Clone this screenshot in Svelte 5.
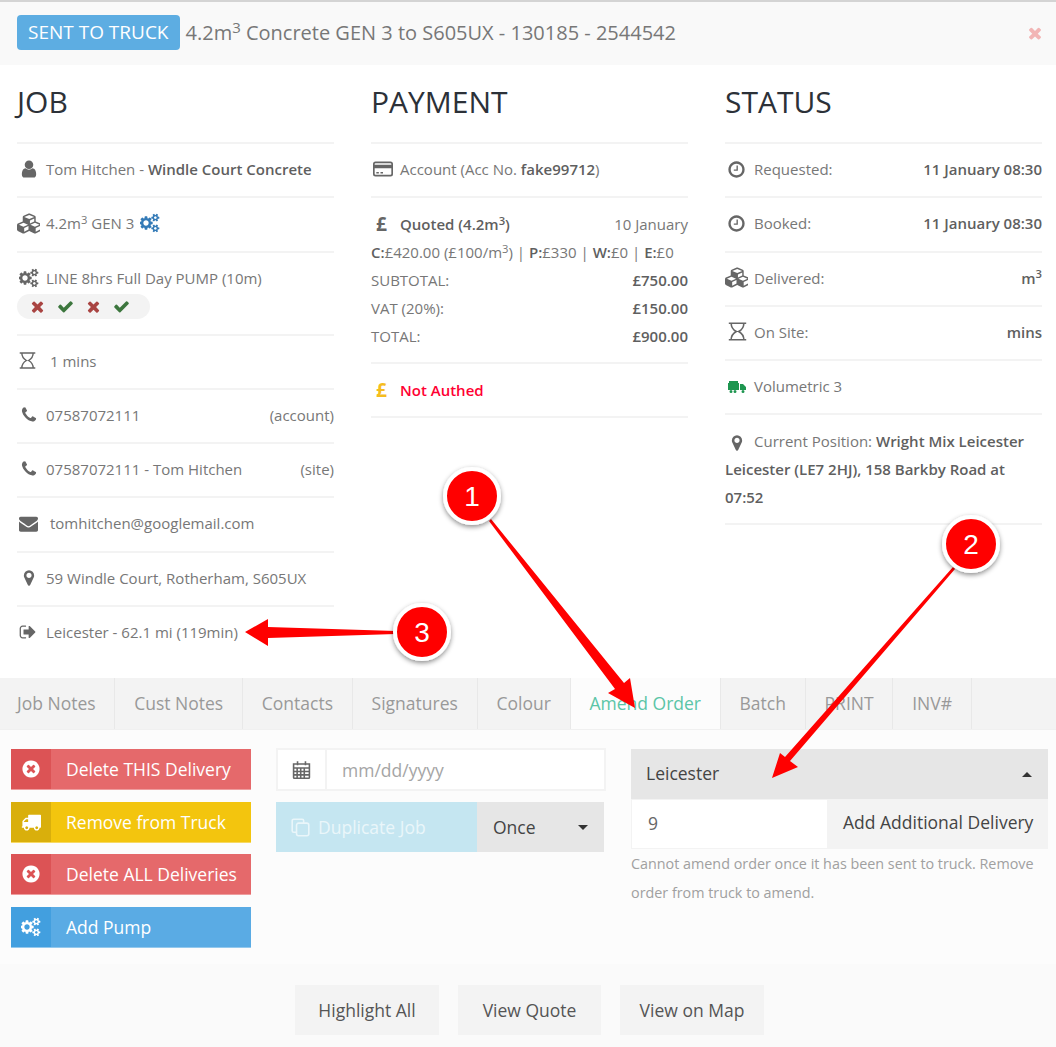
<script>
	const icons = {
		user: ["0 0 1792 1792", "M1536 1399q0 109-62.5 187t-150.5 78h-854q-88 0-150.5-78t-62.5-187q0-85 8.5-160.5t31.5-152 58.5-131 94-89 134.5-34.5q131 128 313 128t313-128q76 0 134.5 34.5t94 89 58.5 131 31.5 152 8.5 160.5zm-256-887q0 159-112.5 271.5t-271.5 112.5-271.5-112.5-112.5-271.5 112.5-271.5 271.5-112.5 271.5 112.5 112.5 271.5z"],
		phone: ["0 0 1792 1792", "M1600 1240q0 27-10 70.5t-21 68.5q-21 50-122 106-94 51-186 51-27 0-53-3.5t-57.5-12.5-47-14.5-55.5-20.5-49-18q-98-35-175-83-127-79-264-216t-216-264q-48-77-83-175-3-9-18-49t-20.5-55.5-14.5-47-12.5-57.5-3.5-53q0-92 51-186 56-101 106-122 25-11 68.5-21t70.5-10q14 0 21 3 18 6 53 76 11 19 30 54t35 63.5 31 53.5q3 4 17.5 25t21.5 35.5 7 28.5q0 20-28.5 50t-62 55-62 53-28.5 46q0 9 5 22.5t8.5 20.5 14 24 11.5 19q76 137 174 235t235 174q2 1 19 11.5t24 14 20.5 8.5 22.5 5q18 0 46-28.5t53-62 55-62 50-28.5q14 0 28.5 7t35.5 21.5 25 17.5q25 15 53.5 31t63.5 35 54 30q70 35 76 53 3 7 3 21z"],
		envelope: ["0 0 1792 1792", "M1792 710v794q0 66-47 113t-113 47h-1472q-66 0-113-47t-47-113v-794q44 49 101 87 362 246 497 345 57 42 92.5 65.5t94.5 48 110 24.5h2q51 0 110-24.5t94.5-48 92.5-65.5q170-123 498-345 57-39 100-87zm0-294q0 79-49 151t-122 123q-376 261-468 325-10 7-42.5 30.5t-54 38-52 32.5-57.5 27-50 9h-2q-23 0-50-9t-57.5-27-52-32.5-54-38-42.5-30.5q-91-64-262-182.5t-205-142.5q-62-42-117-115.5t-55-136.5q0-78 41.5-130t118.5-52h1472q65 0 112.5 47t47.5 113z"],
		marker: ["0 0 1792 1792", "M1152 640q0-106-75-181t-181-75-181 75-75 181 75 181 181 75 181-75 75-181zm256 0q0 109-33 179l-364 774q-16 33-47.5 52t-67.5 19-67.5-19-46.5-52l-365-774q-33-70-33-179 0-212 150-362t362-150 362 150 150 362z"],
		check: ["0 0 1792 1792", "M1671 566q0 40-28 68l-724 724-136 136q-28 28-68 28t-68-28l-136-136-362-362q-28-28-28-68t28-68l136-136q28-28 68-28t68 28l294 295 656-657q28-28 68-28t68 28l136 136q28 28 28 68z"],
		times: ["0 0 1792 1792", "M1490 1322q0 40-28 68l-136 136q-28 28-68 28t-68-28l-294-294-294 294q-28 28-68 28t-68-28l-136-136q-28-28-28-68t28-68l294-294-294-294q-28-28-28-68t28-68l136-136q28-28 68-28t68 28l294 294 294-294q28-28 68-28t68 28l136 136q28 28 28 68t-28 68l-294 294 294 294q28 28 28 68z"],
		timesCircle: ["0 0 1792 1792", "M1277 1122q0-26-19-45l-181-181 181-181q19-19 19-45 0-27-19-46l-90-90q-19-19-46-19-26 0-45 19l-181 181-181-181q-19-19-45-19-27 0-46 19l-90 90q-19 19-19 46 0 26 19 45l181 181-181 181q-19 19-19 45 0 27 19 46l90 90q19 19 46 19 26 0 45-19l181-181 181 181q19 19 45 19 27 0 46-19l90-90q19-19 19-46zm387-226q0 209-103 385.5t-279.5 279.5-385.5 103-385.5-103-279.5-279.5-103-385.5 103-385.5 279.5-279.5 385.5-103 385.5 103 279.5 279.5 103 385.5z"],
		clock: ["0 0 1792 1792", "M1024 544v448q0 14-9 23t-23 9h-320q-14 0-23-9t-9-23v-64q0-14 9-23t23-9h224v-352q0-14 9-23t23-9h64q14 0 23 9t9 23zm416 352q0-148-73-273t-198-198-273-73-273 73-198 198-73 273 73 273 198 198 273 73 273-73 198-198 73-273zm224 0q0 209-103 385.5t-279.5 279.5-385.5 103-385.5-103-279.5-279.5-103-385.5 103-385.5 279.5-279.5 385.5-103 385.5 103 279.5 279.5 103 385.5z"],
		truck: ["0 0 1792 1792", "M640 1408q0-52-38-90t-90-38-90 38-38 90 38 90 90 38 90-38 38-90zm-384-512h384v-256h-158q-13 0-22 9l-195 195q-9 9-9 22v30zm1280 512q0-52-38-90t-90-38-90 38-38 90 38 90 90 38 90-38 38-90zm256-1088v1024q0 15-4 26.5t-13.5 18.5-16.5 11.5-23.5 6-22.5 2-25.5 0-22.5-.5q0 106-75 181t-181 75-181-75-75-181h-384q0 106-75 181t-181 75-181-75-75-181h-64q-3 0-22.5.5t-25.5 0-22.5-2-23.5-6-16.5-11.5-13.5-18.5-4-26.5q0-26 19-45t45-19v-320q0-8-.5-35t0-38 2.5-34.5 6.5-37 14-30.5 22.5-30l198-198q19-19 50.5-32t58.5-13h160v-192q0-26 19-45t45-19h1024q26 0 45 19t19 45z"],
		cogs: ["0 0 1920 1792", "M832 896q0-106-75-181t-181-75-181 75-75 181 75 181 181 75 181-75 75-181zm768 512q0-52-38-90t-90-38-90 38-38 90q0 53 37.5 90.5t90.5 37.5 90.5-37.5 37.5-90.5zm0-1024q0-52-38-90t-90-38-90 38-38 90q0 53 37.5 90.5t90.5 37.5 90.5-37.5 37.5-90.5zm-384 421v185q0 10-7 19.5t-16 10.5l-155 24q-11 35-32 76 34 48 90 115 7 11 7 20 0 12-7 19-23 30-82.5 89.5t-78.5 59.5q-11 0-21-7l-115-90q-37 19-77 31-11 108-23 155-7 24-30 24h-186q-11 0-20-7.5t-10-17.5l-23-153q-34-10-75-31l-118 89q-7 7-20 7-11 0-21-8-144-133-144-160 0-9 7-19 10-14 41-53t47-61q-23-44-35-82l-152-24q-10-1-17-9.5t-7-19.5v-185q0-10 7-19.5t16-10.5l155-24q11-35 32-76-34-48-90-115-7-11-7-20 0-12 7-20 22-30 82-89t79-59q11 0 21 7l115 90q34-18 77-32 11-108 23-154 7-24 30-24h186q11 0 20 7.5t10 17.5l23 153q34 10 75 31l118-89q8-7 20-7 11 0 21 8 144 133 144 160 0 8-7 19-12 16-42 54t-45 60q23 48 34 82l152 23q10 2 17 10.5t7 19.5zm640 533v140q0 16-149 31-12 27-30 52 51 113 51 138 0 4-4 7-122 71-124 71-8 0-46-47t-52-68q-20 2-30 2t-30-2q-14 21-52 68t-46 47q-2 0-124-71-4-3-4-7 0-25 51-138-18-25-30-52-149-15-149-31v-140q0-16 149-31 13-29 30-52-51-113-51-138 0-4 4-7 4-2 35-20t59-34 30-16q8 0 46 46.5t52 67.5q20-2 30-2t30 2q51-71 92-112l6-2q4 0 124 70 4 3 4 7 0 25-51 138 17 23 30 52 149 15 149 31zm0-1024v140q0 16-149 31-12 27-30 52 51 113 51 138 0 4-4 7-122 71-124 71-8 0-46-47t-52-68q-20 2-30 2t-30-2q-14 21-52 68t-46 47q-2 0-124-71-4-3-4-7 0-25 51-138-18-25-30-52-149-15-149-31v-140q0-16 149-31 13-29 30-52-51-113-51-138 0-4 4-7 4-2 35-20t59-34 30-16q8 0 46 46.5t52 67.5q20-2 30-2t30 2q51-71 92-112l6-2q4 0 124 70 4 3 4 7 0 25-51 138 17 23 30 52 149 15 149 31z"],
		cubes: ["0 0 2048 1792", "M640 1632l384-192v-314l-384 164v342zm-64-454l404-173-404-173-404 173zm1088 454l384-192v-314l-384 164v342zm-64-454l404-173-404-173-404 173zm-448-293l384-165v-266l-384 164v267zm-64-379l441-189-441-189-441 189zm1088 518v416q0 36-19 67t-52 47l-448 224q-25 14-57 14t-57-14l-448-224q-4-2-7-4-2 2-7 4l-448 224q-25 14-57 14t-57-14l-448-224q-33-16-52-47t-19-67v-416q0-38 21.5-70t56.5-48l434-186v-400q0-38 21.5-70t56.5-48l448-192q23-10 50-10t50 10l448 192q35 16 56.5 48t21.5 70v400l434 186q36 16 57 48t21 70z"],
		signOut: ["0 0 1792 1792", "M704 1440q0 4 1 20t.5 26.5-3 23.5-10 19.5-20.5 6.5h-320q-119 0-203.5-84.5t-84.5-203.5v-704q0-119 84.5-203.5t203.5-84.5h320q13 0 22.5 9.5t9.5 22.5q0 4 1 20t.5 26.5-3 23.5-10 19.5-20.5 6.5h-320q-66 0-113 47t-47 113v704q0 66 47 113t113 47h312l11.5 1 11.5 3 8 5.5 7 9 2 13.5zm928-544q0 26-19 45l-544 544q-19 19-45 19t-45-19-19-45v-288h-448q-26 0-45-19t-19-45v-384q0-26 19-45t45-19h448v-288q0-26 19-45t45-19 45 19l544 544q19 19 19 45z"],
		lorry: ["0 0 18 13", "M1 1h9v2h1v7H0V3h1zM12 4h3l3 3v3h-6zM3 10a1.500 1.500 0 1 1 0 3 1.500 1.500 0 0 1 0-3zM7 10a1.500 1.500 0 1 1 0 3 1.500 1.500 0 0 1 0-3zM15 10a1.500 1.500 0 1 1 0 3 1.500 1.500 0 0 1 0-3z"],
		hourglass: ["0 0 24 24", "M1 1.500h22M1 22.500h22M4 1.500c0 5 2 8 6.500 10.500C6 14.500 4 17.500 4 22.500M20 1.500c0 5-2 8-6.500 10.500c4.500 2.500 6.500 5.500 6.500 10.500"],
		card: ["0 0 24 24", "M3 4h18a2 2 0 0 1 2 2v12a2 2 0 0 1-2 2H3a2 2 0 0 1-2-2V6a2 2 0 0 1 2-2zM1 8h22M1 10h22M4 16.500h3M9 16.500h3"],
		files: ["0 0 24 24", "M7 18H3.500a2 2 0 0 1-2-2V3.500a2 2 0 0 1 2-2H14a2 2 0 0 1 2 2V6M9.500 6.500H20a2.500 2.500 0 0 1 2.500 2.500v11a2.500 2.500 0 0 1-2.500 2.500H9.500A2.500 2.500 0 0 1 7 20V9a2.500 2.500 0 0 1 2.500-2.500z"],
		calendar: ["0 0 24 24", "M2 5h20v17a1 1 0 0 1-1 1H3a1 1 0 0 1-1-1zM2 10h20M2 14.500h20M2 18.800h20M6.500 10v13M11 10v13M15.500 10v13M7 1.500v5M17 1.500v5"]
	};
	const stroked = ["hourglass", "card", "files", "calendar"];

	const tabs = ["Job Notes", "Cust Notes", "Contacts", "Signatures", "Colour", "Amend Order", "Batch", "PRINT", "INV#"];
	const actions = [
		{ label: "Delete THIS Delivery", icon: "timesCircle", tone: "red" },
		{ label: "Remove from Truck", icon: "truck", tone: "yellow" },
		{ label: "Delete ALL Deliveries", icon: "timesCircle", tone: "red" },
		{ label: "Add Pump", icon: "cogs", tone: "blue" }
	];
	const badges = [
		{ n: 1, x: 472, y: 496 },
		{ n: 2, x: 971, y: 544 },
		{ n: 3, x: 422, y: 632 }
	];
</script>

{#snippet ic(name, cls = "")}
	<svg class="ic {cls}" class:line={stroked.includes(name)} viewBox={icons[name][0]} aria-hidden="true"><path d={icons[name][1]} /></svg>
{/snippet}

<div class="page">
	<header class="top">
		<span class="state">SENT TO TRUCK</span>
		<span class="title">4.2m<sup>3</sup> Concrete GEN 3 to S605UX - 130185 - 2544542</span>
		{@render ic("times", "s18 close")}
	</header>

	<main class="cols">
		<section>
			<h2>JOB</h2>
			<div class="row"><span class="slot p2">{@render ic("user", "s20")}</span><span>Tom Hitchen - <b>Windle Court Concrete</b></span></div>
			<div class="row"><span class="slot">{@render ic("cubes", "s23")}</span><span>4.2m<sup>3</sup> GEN 3 {@render ic("cogs", "s20 blue")}</span></div>
			<div class="row pump">
				<div class="line1"><span class="slot p2">{@render ic("cogs", "s20")}</span><span>LINE 8hrs Full Day PUMP (10m)</span></div>
				<div class="pill">
					{@render ic("times", "s17 no")}{@render ic("check", "s17 yes")}{@render ic("times", "s17 no")}{@render ic("check", "s17 yes")}
				</div>
			</div>
			<div class="row"><span class="slot gap">{@render ic("hourglass", "s17")}</span><span>1 mins</span></div>
			<div class="row"><span class="slot p3">{@render ic("phone", "s18")}</span><span class="grow">07587072111</span><span>(account)</span></div>
			<div class="row"><span class="slot p3">{@render ic("phone", "s18")}</span><span class="grow">07587072111 - Tom Hitchen</span><span>(site)</span></div>
			<div class="row"><span class="slot gap">{@render ic("envelope", "s19")}</span><span>tomhitchen@googlemail.com</span></div>
			<div class="row"><span class="slot p3">{@render ic("marker", "s18")}</span><span>59 Windle Court, Rotherham, S605UX</span></div>
			<div class="row"><span class="slot p2">{@render ic("signOut", "s18")}</span><span>Leicester - 62.1 mi (119min)</span></div>
		</section>

		<section>
			<h2>PAYMENT</h2>
			<div class="row"><span class="slot p2">{@render ic("card", "s20")}</span><span>Account (Acc No. <b>fake99712</b>)</span></div>
			<div class="row quote">
				<div class="qline"><span class="slot pound">£</span><b class="grow">Quoted (4.2m<sup>3</sup>)</b><span>10 January</span></div>
				<div class="qline"><span><b>C:</b>£420.00 (£100/m<sup>3</sup>) | <b>P:</b>£330 | <b>W:</b>£0 | <b>E:</b>£0</span></div>
				<div class="qline"><span class="grow">SUBTOTAL:</span><b>£750.00</b></div>
				<div class="qline"><span class="grow">VAT (20%):</span><b>£150.00</b></div>
				<div class="qline"><span class="grow">TOTAL:</span><b>£900.00</b></div>
			</div>
			<div class="row endrow"><span class="slot pound gold">£</span><b class="unauth">Not Authed</b></div>
		</section>

		<section>
			<h2>STATUS</h2>
			<div class="row"><span class="slot p2">{@render ic("clock", "s19")}</span><span class="grow">Requested:</span><b>11 January 08:30</b></div>
			<div class="row"><span class="slot p2">{@render ic("clock", "s19")}</span><span class="grow">Booked:</span><b>11 January 08:30</b></div>
			<div class="row"><span class="slot">{@render ic("cubes", "s23")}</span><span class="grow">Delivered:</span><b>m<sup>3</sup></b></div>
			<div class="row"><span class="slot p3">{@render ic("hourglass", "s19")}</span><span class="grow">On Site:</span><b>mins</b></div>
			<div class="row"><span class="slot p3">{@render ic("lorry", "lorry")}</span><span>Volumetric 3</span></div>
			<div class="row pos"><span class="posmark">{@render ic("marker", "s18")}</span>Current Position: <b>Wright Mix Leicester</b> <b>Leicester (LE7 2HJ), 158 Barkby Road at 07:52</b></div>
		</section>
	</main>

	<nav class="tabs">
		{#each tabs as t}
			<span class="tab" class:active={t === "Amend Order"}>{t}</span>
		{/each}
	</nav>

	<div class="panel">
		<div class="actions">
			{#each actions as a}
				<button class="act {a.tone}"><span class="acticon">{@render ic(a.icon, "s20")}</span><span class="actlabel">{a.label}</span></button>
			{/each}
		</div>
		<div class="mid">
			<div class="date">
				<span class="addon">{@render ic("calendar", "s19")}</span>
				<span class="placeholder">mm/dd/yyyy</span>
			</div>
			<div class="dup">
				<span class="dupbtn">{@render ic("files", "s19")}Duplicate Job</span>
				<span class="once">Once<i class="caret"></i></span>
			</div>
		</div>
		<div class="right">
			<div class="select">Leicester<i class="caret up"></i></div>
			<div class="addrow">
				<span class="num">9</span>
				<span class="addbtn">Add Additional Delivery</span>
			</div>
			<p class="help">Cannot amend order once it has been sent to truck. Remove order from truck to amend.</p>
		</div>
	</div>

	<footer class="foot">
		<button>Highlight All</button>
		<button class="narrow">View Quote</button>
		<button>View on Map</button>
	</footer>

	<svg class="marks" viewBox="0 0 1056 1047" aria-hidden="true">
		<defs>
			<filter id="sh" x="-30%" y="-30%" width="160%" height="160%"><feDropShadow dx="0" dy="2" stdDeviation="2.500" flood-color="#000" flood-opacity="0.45" /></filter>
		</defs>
		<polygon points="491,519 624,683 630,678 635,708 608,693 615,689 489,521" />
		<polygon points="955,569 790,761 798,767 772,778 780,753 785,757 953,567" />
		<polygon points="396,631 268,627 268,619 245,632 268,646 268,638 396,634" />
		{#each badges as b}
			<circle class="ring" cx={b.x} cy={b.y} r="27" filter="url(#sh)" />
			<text x={b.x} y={b.y + 10}>{b.n}</text>
		{/each}
	</svg>
</div>

<style>
	:global(body) {
		margin: 0;
		background: #fff;
	}
	.page {
		position: relative;
		width: 1056px;
		height: 1047px;
		overflow: hidden;
		font-family: "Open Sans", sans-serif;
		font-size: 15px;
		color: #777;
		background: #fff;
	}
	sup {
		font-size: 75%;
		line-height: 0;
		position: relative;
		top: -0.5em;
		vertical-align: baseline;
	}
	b {
		font-weight: 600;
		color: #5f5f5f;
	}
	.ic {
		display: inline-block;
		vertical-align: middle;
		fill: #666;
	}
	.ic.line {
		fill: none;
		stroke: #666;
		stroke-width: 2;
	}
	.s17 { width: 17px; height: 17px; }
	.s18 { width: 18px; height: 18px; }
	.s19 { width: 19px; height: 19px; }
	.s20 { width: 20px; height: 20px; }
	.s23 { width: 23px; height: 23px; }
	.ic.blue { fill: #337ab7; vertical-align: -4px; margin-left: 2px; }
	.ic.no { fill: #a94442; }
	.ic.yes { fill: #3c763d; }
	.ic.lorry { width: 18px; height: 13px; fill: #1e9650; }
	.ic.close { fill: #f2b5b5; }

	.top {
		display: flex;
		align-items: center;
		box-sizing: content-box;
		height: 61px;
		padding: 0 12px 2px 17px;
		border-top: 2px solid #d4d4d4;
		background: #f9f9f9;
	}
	.state {
		padding: 0 11px;
		height: 35px;
		line-height: 35px;
		border-radius: 4px;
		background: #5dade2;
		color: #fff;
		font-size: 19px;
		white-space: nowrap;
	}
	.title {
		margin-left: 6px;
		font-size: 20px;
		flex: 1;
		white-space: nowrap;
	}

	.cols {
		display: grid;
		grid-template-columns: 317px 317px 317px;
		column-gap: 37px;
		padding: 0 14px 0 17px;
		height: 613px;
	}
	section {
		min-width: 0;
	}
	h2 {
		margin: 0;
		height: 77px;
		padding-top: 18px;
		box-sizing: border-box;
		font-size: 30px;
		line-height: 38px;
		font-weight: 400;
		color: #2c3138;
	}
	.row {
		display: flex;
		align-items: center;
		box-sizing: border-box;
		height: 54.250px;
		padding-bottom: 2px;
		border-top: 2px solid #f3f3f3;
		line-height: 24px;
	}
	.slot {
		flex: none;
		width: 29px;
		box-sizing: border-box;
		display: flex;
		align-items: center;
		justify-content: flex-start;
	}
	.slot.p2 { padding-left: 2px; }
	.slot.p3 { padding-left: 3px; }
	.slot.gap {
		width: 33px;
		padding-left: 2px;
	}
	.grow {
		flex: 1;
	}
	.row.pump {
		display: block;
		height: 83px;
		padding-top: 13px;
	}
	.line1 {
		display: flex;
		align-items: center;
		height: 24px;
	}
	.pill {
		display: flex;
		align-items: center;
		gap: 11px;
		width: 133px;
		height: 25px;
		box-sizing: border-box;
		margin-top: 4px;
		padding-left: 12px;
		border-radius: 13px;
		background: #f3f3f3;
	}
	.pound {
		font-size: 19px;
		font-weight: 700;
		color: #666;
		padding-left: 5px;
	}
	.pound.gold {
		color: #f5bd1f;
	}
	.unauth {
		color: #ff0033;
	}
	.row.quote {
		display: block;
		height: 166px;
		padding-top: 12px;
	}
	.qline {
		display: flex;
		align-items: center;
		height: 28px;
	}
	.row.endrow {
		border-bottom: 2px solid #f3f3f3;
		height: 56px;
		padding-bottom: 0;
	}
	.row.pos {
		display: block;
		height: 112px;
		padding-top: 12px;
		line-height: 28px;
		border-bottom: 2px solid #f3f3f3;
	}
	.posmark {
		display: inline-block;
		width: 29px;
		padding-left: 3px;
		box-sizing: border-box;
	}

	.tabs {
		display: flex;
		height: 51px;
		background: #f3f3f3;
		border-bottom: 1px solid #f0f0f0;
	}
	.tab {
		padding: 0 18.800px;
		line-height: 50px;
		font-size: 17.500px;
		color: #999;
		border-right: 1px solid #e8e8e8;
		white-space: nowrap;
	}
	.tab:first-child {
		padding-left: 17px;
	}
	.tab.active {
		background: #fcfcfc;
		color: #5bc5a7;
	}

	.panel {
		display: flex;
		height: 234px;
		box-sizing: border-box;
		padding: 19px 8px 0 11px;
		background: #fcfcfc;
	}
	.actions {
		display: flex;
		flex-direction: column;
		gap: 11.500px;
		width: 240px;
		margin-right: 25px;
	}
	.act {
		display: flex;
		align-items: stretch;
		height: 41px;
		padding: 0;
		border: 0;
		border-bottom: 1px solid rgba(255, 255, 255, 0.35);
		font: inherit;
		font-size: 17.500px;
		color: #fff;
		text-align: left;
	}
	.act .ic {
		fill: #fff;
	}
	.acticon {
		width: 40px;
		display: flex;
		align-items: center;
		justify-content: center;
	}
	.actlabel {
		padding-left: 15px;
		line-height: 40px;
		white-space: nowrap;
	}
	.act.red { background: #e5696b; }
	.act.red .acticon { background: #dc5355; }
	.act.yellow { background: #f3c50e; }
	.act.yellow .acticon { background: #d9af0c; }
	.act.blue { background: #5aabe4; }
	.act.blue .acticon { background: #429fdf; }

	.mid {
		width: 330px;
		margin-right: 25px;
	}
	.date {
		display: flex;
		height: 43px;
		margin-top: -1px;
		box-sizing: border-box;
		border: 2px solid #f3f3f3;
		background: #fff;
		align-items: stretch;
	}
	.addon {
		width: 47px;
		display: flex;
		align-items: center;
		justify-content: center;
		border-right: 2px solid #f3f3f3;
	}
	.placeholder {
		padding-left: 15px;
		font-size: 17.500px;
		line-height: 40px;
		color: #a5a5a5;
	}
	.dup {
		display: flex;
		height: 50px;
		margin-top: 11px;
		width: 328px;
		font-size: 17.500px;
	}
	.dupbtn {
		display: flex;
		align-items: center;
		gap: 8px;
		width: 201px;
		box-sizing: border-box;
		padding-left: 15px;
		background: #c5e6f1;
		color: #eaf6fa;
	}
	.dupbtn .ic {
		stroke: #eaf6fa;
	}
	.once {
		flex: 1;
		position: relative;
		padding-left: 16px;
		line-height: 50px;
		background: #e6e6e6;
		color: #444;
	}
	.caret {
		position: absolute;
		right: 16px;
		top: 23px;
		border-left: 5px solid transparent;
		border-right: 5px solid transparent;
		border-top: 5px solid #333;
	}
	.caret.up {
		border-top: 0;
		border-bottom: 5px solid #333;
	}
	.right {
		width: 417px;
	}
	.select {
		position: relative;
		height: 49.500px;
		padding-left: 15px;
		line-height: 49px;
		font-size: 17.500px;
		color: #444;
		background: #e6e6e6;
	}
	.addrow {
		display: flex;
		height: 50px;
		font-size: 17.500px;
	}
	.num {
		width: 197px;
		box-sizing: border-box;
		padding-left: 16px;
		line-height: 47px;
		background: #fff;
		border: 1px solid #f3f3f3;
		color: #666;
	}
	.addbtn {
		flex: 1;
		padding-left: 15px;
		line-height: 47px;
		background: #f3f3f3;
		color: #444;
		white-space: nowrap;
	}
	.help {
		margin: 0;
		font-size: 14.350px;
		line-height: 29px;
		color: #a0a0a0;
	}

	.foot {
		display: flex;
		gap: 19px;
		height: 84px;
		padding: 21px 0 0 295px;
		box-sizing: border-box;
		background: #fafafa;
	}
	.foot button {
		width: 144px;
		height: 50px;
		padding: 0;
		border: 0;
		background: #f3f3f3;
		font: inherit;
		font-size: 17.500px;
		color: #555;
	}
	.foot button.narrow {
		width: 143px;
	}

	.marks {
		position: absolute;
		left: 0;
		top: 0;
		width: 1056px;
		height: 1047px;
		fill: #f00;
		pointer-events: none;
	}
	.ring {
		stroke: #fff;
		stroke-width: 4;
	}
	.marks text {
		font-family: "Liberation Sans", sans-serif;
		font-size: 28px;
		fill: #fff;
		text-anchor: middle;
	}
</style>
